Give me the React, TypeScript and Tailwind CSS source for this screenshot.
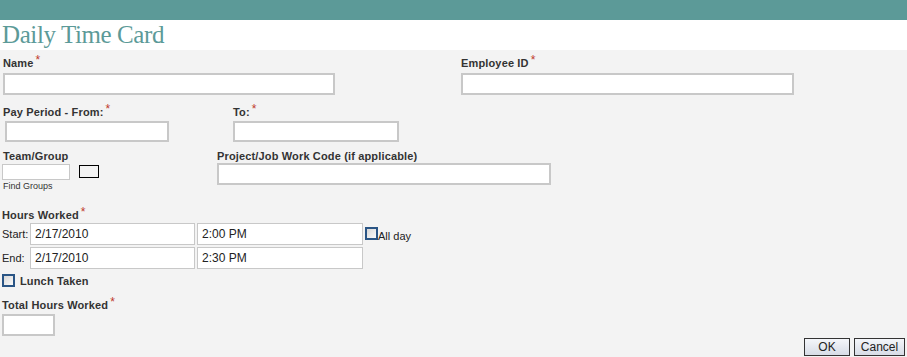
const Req = () => <span className="text-[#c0392b] font-normal text-[12px] relative -top-[3px] ml-[2px]">*</span>;

const Label = ({ text, req, className = "" }: { text: string; req?: boolean; className?: string }) => (
    <div className={"text-[11px] leading-[14px] font-bold text-[#333] tracking-[0.15px] " + className}>
        {text}
        {req && <Req />}
    </div>
);

const Box = ({ className = "", value = "" }: { className?: string; value?: string }) => (
    <input
        readOnly
        value={value}
        className={"block bg-white border border-[#c8c8c8] text-[12px] text-[#222] px-[4px] outline-none " + className}
    />
);

const Check = ({ className = "" }: { className?: string }) => (
    <span className={"inline-block w-[13px] h-[13px] border-2 border-[#2a5585] bg-gradient-to-br from-[#d8d8d8] to-[#fafafa] " + className} />
);

export default function App() {
    return (
        <div className="w-[907px] h-[357px] bg-[#f3f3f3] flex flex-col" style={{ fontFamily: '"Liberation Sans", Arial, sans-serif' }}>
            <div className="h-[20px] bg-[#5c9a98] shrink-0" />
            <div className="h-[30px] bg-white shrink-0 pl-[2px]">
                <h1 className="text-[25px] leading-[30px] text-[#5c9a98] tracking-[-0.4px]" style={{ fontFamily: '"Liberation Serif", "Times New Roman", serif' }}>
                    Daily Time Card
                </h1>
            </div>

            <div className="flex-1 flex flex-col pt-[6px]">
                <div className="flex">
                    <div className="w-[461px] pl-[3px]">
                        <Label text="Name" req />
                        <Box className="mt-[3px] w-[332px] h-[22px] border-2" />
                    </div>
                    <div>
                        <Label text="Employee ID" req />
                        <Box className="mt-[3px] w-[333px] h-[22px] border-2" />
                    </div>
                </div>

                <div className="flex mt-[10px]">
                    <div className="w-[233px] pl-[3px]">
                        <Label text="Pay Period - From:" req />
                        <Box className="mt-[2px] ml-[2px] w-[164px] h-[21px] border-2" />
                    </div>
                    <div>
                        <Label text="To:" req />
                        <Box className="mt-[2px] w-[166px] h-[21px] border-2" />
                    </div>
                </div>

                <div className="flex mt-[7px]">
                    <div className="w-[217px] pl-[2px]">
                        <Label text="Team/Group" className="pl-[1px]" />
                        <div className="flex items-start mt-[1px]">
                            <Box className="w-[68px] h-[16px] border-[#888]" />
                            <span className="ml-[9px] mt-[1px] w-[20px] h-[13px] border border-black" />
                        </div>
                        <div className="text-[9px] leading-[11px] text-[#333] mt-[1px] pl-[1px]">Find Groups</div>
                    </div>
                    <div>
                        <Label text="Project/Job Work Code (if applicable)" />
                        <Box className="mt-[0px] w-[334px] h-[22px] border-2" />
                    </div>
                </div>

                <div className="pl-[2px] mt-[16px]">
                    <Label text="Hours Worked" req />
                    <div className="flex items-start mt-[1px] h-[22px]">
                        <span className="w-[28px] text-[11px] leading-[22px] text-[#222]">Start:</span>
                        <Box value="2/17/2010" className="w-[165px] h-[22px]" />
                        <Box value="2:00 PM" className="ml-[2px] w-[166px] h-[22px]" />
                        <Check className="ml-[2px] mt-[4px]" />
                        <span className="text-[11px] leading-[12px] mt-[7px] text-[#222]">All day</span>
                    </div>
                    <div className="flex items-start mt-[2px] h-[22px]">
                        <span className="w-[28px] text-[11px] leading-[22px] text-[#222]">End:</span>
                        <Box value="2/17/2010" className="w-[165px] h-[22px]" />
                        <Box value="2:30 PM" className="ml-[2px] w-[166px] h-[22px]" />
                    </div>
                    <div className="flex items-center mt-[4px]">
                        <Check />
                        <span className="ml-[5px] text-[11px] font-bold text-[#333] leading-[14px] mt-[1px] tracking-[0.15px]">Lunch Taken</span>
                    </div>
                    <Label text="Total Hours Worked" req className="mt-[10px]" />
                    <Box className="mt-[2px] w-[53px] h-[22px] border-2" />
                </div>

                <div className="flex justify-end gap-[4px] pr-[2px] mt-[2px]">
                    <button className="w-[46px] h-[18px] border border-[#333] bg-gradient-to-b from-[#f4f6fa] to-[#d7dce6] text-[12px] leading-[14px] text-[#222]">OK</button>
                    <button className="w-[51px] h-[18px] border border-[#333] bg-gradient-to-b from-[#f4f6fa] to-[#d7dce6] text-[12px] leading-[14px] text-[#222]">Cancel</button>
                </div>
            </div>
        </div>
    );
}
